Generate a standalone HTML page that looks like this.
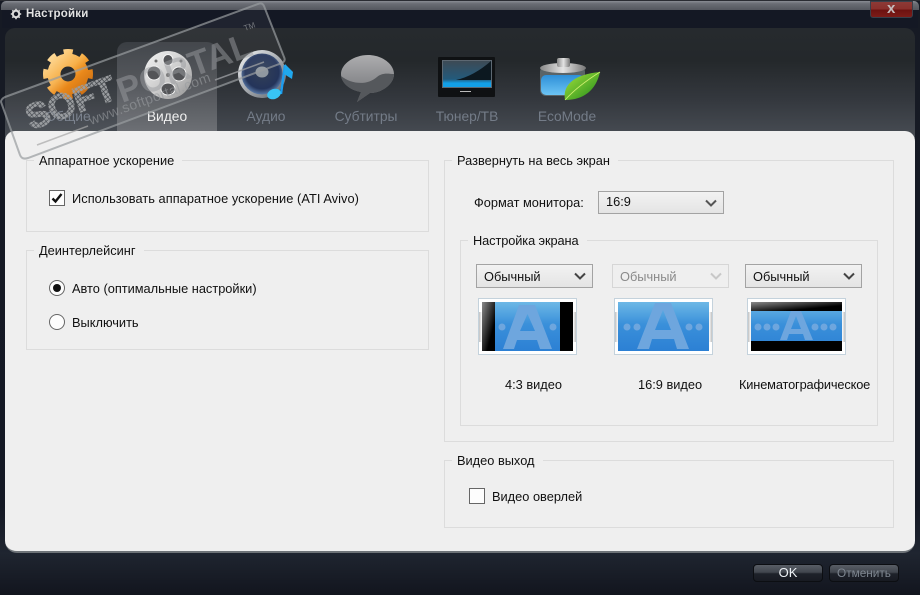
<!DOCTYPE html>
<html><head><meta charset="utf-8">
<style>
html,body{margin:0;padding:0;background:#000}
#w{position:relative;width:920px;height:595px;overflow:hidden;background:linear-gradient(#161a24 0,#141824 85%,#1f2530 93%,#12151e 100%);font-family:"Liberation Sans",sans-serif;font-size:12.8px;color:#111}
.a{position:absolute}
.t{position:absolute;white-space:nowrap;line-height:16px}
.gb{position:absolute;border:1px solid #dcdcdc;box-sizing:border-box}
.lg{position:absolute;background:#efefef;padding:0 8px 0 5px;white-space:nowrap;line-height:16px;height:16px}
.sel{position:absolute;box-sizing:border-box;border:1px solid #a3a3a3;background:linear-gradient(#f2f2f2,#e4e4e4);line-height:23px;padding-left:7px;height:24px}
.sel svg{position:absolute;right:5px;top:7px}
.sel.d{border-color:#d6d6d6;background:#efefef;color:#8a8a8a}
.tab{position:absolute;top:109px;line-height:16px;color:#747c88;text-align:center;width:100px;font-size:13.8px}
.thumb{position:absolute;top:298px;width:99px;height:57px;box-sizing:border-box;border:1px solid #c4d2dc;background:linear-gradient(90deg,#c0c0c0,#fff) no-repeat left center/3px 30px,linear-gradient(270deg,#c0c0c0,#fff) no-repeat right center/3px 30px,#fff}
.btn{position:absolute;top:564px;width:70px;height:18px;box-sizing:border-box;border:1px solid #0c0e12;border-radius:4px;background:linear-gradient(#585d65 0,#42474f 45%,#1e222a 55%,#181b22 100%);text-align:center;line-height:16px}
</style></head>
<body><div id="w">
<!-- title bar -->
<div class="a" style="left:1px;top:1px;width:918px;height:9px;border-radius:5px 5px 0 0;background:linear-gradient(#8a8d94 0,#6a6d74 30%,#54575e 100%)"></div>
<div class="a" style="left:0;top:0;width:920px;height:1px;background:#2a2c32"></div>
<div class="a" style="left:2px;top:10px;width:916px;height:18px;background:#141824"></div>
<div class="t" style="left:26px;top:6px;color:#e2e2e2;font-weight:bold;font-size:11.5px;letter-spacing:.2px">Настройки</div>
<svg class="a" style="left:10px;top:8px" width="12" height="12" viewBox="0 0 12 12"><circle cx="6" cy="6" r="3.2" fill="none" stroke="#dcdcdc" stroke-width="2"/><path d="M6 .8V3M6 9v2.2M.8 6H3M9 6h2.2M2.3 2.3l1.6 1.6M8.100 8.100l1.600 1.600M9.700 2.300L8.100 3.900M3.900 8.100L2.300 9.700" stroke="#dcdcdc" stroke-width="1.6"/></svg>
<!-- close -->
<div class="a" style="left:870px;top:1px;width:43px;height:17px;box-sizing:border-box;border:1px solid #3a3f4a;border-radius:0 0 3px 3px;background:linear-gradient(#8c3a36 0,#8a302c 45%,#6e1210 55%,#7c1c18 100%)"></div>
<div class="t" style="left:887px;top:1px;color:#c4bcbc;font-weight:bold;font-size:15px">x</div>
<!-- header panel -->
<div class="a" style="left:5px;top:28px;width:910px;height:110px;border-radius:10px 10px 0 0;background:linear-gradient(#262a2e 0,#24282b 30%,#34383e 65%,#484d54 100%)"></div>
<div class="a" style="left:117px;top:42px;width:100px;height:90px;border-radius:10px 10px 0 0;background:linear-gradient(#3a3e43 0,#4a4d52 40%,#6d7075 100%)"></div>
<!-- gear -->
<svg class="a" style="left:43px;top:49px" width="50" height="50" viewBox="0 0 50 50">
<defs><linearGradient id="g1" gradientUnits="userSpaceOnUse" x1="6" y1="4" x2="44" y2="46"><stop offset="0" stop-color="#ffe0a4"/><stop offset=".45" stop-color="#f7b04a"/><stop offset=".65" stop-color="#e8820e"/><stop offset="1" stop-color="#c46408"/></linearGradient></defs>
<circle cx="25" cy="25" r="14" fill="none" stroke="url(#g1)" stroke-width="13"/>
<circle cx="25" cy="25" r="22" fill="none" stroke="url(#g1)" stroke-width="6" stroke-dasharray="9 8.280" stroke-dashoffset="4.500"/>
</svg>
<!-- reel -->
<svg class="a" style="left:141px;top:50px" width="54" height="52" viewBox="0 0 54 52">
<defs><linearGradient id="g2" x1="0" y1="0" x2="1" y2="1"><stop offset="0" stop-color="#f4f4f4"/><stop offset=".55" stop-color="#c8c8c8"/><stop offset="1" stop-color="#8c8c8c"/></linearGradient></defs>
<circle cx="27" cy="25" r="24" fill="url(#g2)"/>
<g fill="#4a4b4e" stroke="#f4f4f4" stroke-width="1"><ellipse cx="27" cy="10" rx="5" ry="5.500"/><ellipse cx="13" cy="23" rx="7" ry="7"/><ellipse cx="38" cy="24" rx="7" ry="7"/><ellipse cx="27" cy="39" rx="7" ry="6"/></g>
<circle cx="27" cy="25" r="2" fill="#777"/><circle cx="15" cy="11" r="1.500" fill="#666"/><circle cx="40" cy="11" r="1.500" fill="#666"/>
</svg>
<!-- speaker -->
<svg class="a" style="left:237px;top:48px" width="62" height="56" viewBox="0 0 62 56">
<defs><radialGradient id="g3" cx=".5" cy=".45" r=".55"><stop offset="0" stop-color="#8fa0b0"/><stop offset=".25" stop-color="#2e3c58"/><stop offset=".75" stop-color="#24345a"/><stop offset="1" stop-color="#5a7aa8"/></radialGradient><linearGradient id="g4" x1="0" y1="0" x2="1" y2="1"><stop offset="0" stop-color="#f2f4f6"/><stop offset="1" stop-color="#5a6068"/></linearGradient></defs>
<circle cx="25" cy="26" r="24" fill="url(#g4)"/><circle cx="25" cy="26" r="20.500" fill="url(#g3)"/><ellipse cx="25" cy="24" rx="6.500" ry="5.500" fill="#9098a0"/>
<path d="M48 17L44 46" stroke="#1b9cf0" stroke-width="2.400" fill="none"/><path d="M48 16L56 24 55 31 47 26z" fill="#20a8ee"/><ellipse cx="37" cy="46" rx="7" ry="5" fill="#38c4f4" transform="rotate(-20 37 46)"/>
</svg>
<!-- bubble -->
<svg class="a" style="left:339px;top:52px" width="58" height="52" viewBox="0 0 58 52">
<defs><linearGradient id="g5" x1="0" y1="0" x2="0" y2="1"><stop offset="0" stop-color="#adadaf"/><stop offset=".55" stop-color="#8a8b8e"/><stop offset="1" stop-color="#75777a"/></linearGradient></defs>
<path d="M29 3C43 3 55 12 55 22 55 32 43 41 31 41L18 50 22 40C10 38 2 30 2 22 2 12 15 3 29 3z" fill="url(#g5)"/>
<path d="M2 24C12 32 28 34 38 25 44 20 50 22 55 22 55 32 43 41 31 41L18 50 22 40C10 38 3 31 2 24z" fill="#55585c"/>
</svg>
<!-- tv -->
<svg class="a" style="left:436px;top:56px" width="62" height="44" viewBox="0 0 62 44">
<defs><linearGradient id="g6" x1="0" y1="0" x2="0" y2="1"><stop offset="0" stop-color="#3d4a55"/><stop offset=".7" stop-color="#235a7c"/><stop offset=".85" stop-color="#12a0e8"/><stop offset="1" stop-color="#12a0e8"/></linearGradient></defs>
<rect x="2" y="1" width="57" height="40" rx="1" fill="#0f1113"/><rect x="6" y="4" width="50" height="28" fill="#5d6872"/><rect x="7" y="5" width="48" height="26" fill="url(#g6)"/><path d="M20 24Q38 20 55 5V24z" fill="#0c1820"/><rect x="24" y="35" width="11" height="1" fill="#bbb"/>
</svg>
<!-- battery -->
<svg class="a" style="left:538px;top:56px" width="66" height="48" viewBox="0 0 66 48">
<defs><linearGradient id="g7" x1="0" y1="0" x2="0" y2="1"><stop offset="0" stop-color="#2e8fd8"/><stop offset="1" stop-color="#6cc4f4"/></linearGradient><linearGradient id="g8" x1="0" y1="0" x2="1" y2="1"><stop offset="0" stop-color="#a6e23c"/><stop offset="1" stop-color="#1e8a1a"/></linearGradient><linearGradient id="g9" x1="0" y1="0" x2="1" y2="0"><stop offset="0" stop-color="#888"/><stop offset=".5" stop-color="#e4e4e4"/><stop offset="1" stop-color="#777"/></linearGradient></defs>
<rect x="2" y="10" width="45" height="30" rx="6" fill="#5a6468"/>
<ellipse cx="25" cy="12" rx="23" ry="5" fill="url(#g9)"/><rect x="19" y="2" width="13" height="9" rx="2" fill="url(#g9)"/>
<rect x="3" y="19" width="43" height="20" rx="5" fill="url(#g7)"/>
<path d="M27 44C24 28 38 18 62 16 58 34 46 44 27 44z" fill="url(#g8)"/><path d="M27 44C36 34 46 26 62 16" stroke="#d0f070" stroke-width=".8" fill="none"/>
</svg>
<!-- tab labels -->
<div class="tab" style="left:18px">Общие</div>
<div class="tab" style="left:117px;color:#f0f0f0">Видео</div>
<div class="tab" style="left:216px">Аудио</div>
<div class="tab" style="left:316px">Субтитры</div>
<div class="tab" style="left:417px">Тюнер/ТВ</div>
<div class="tab" style="left:517px">EcoMode</div>
<!-- main panel -->
<div class="a" style="left:5px;top:131px;width:910px;height:422px;box-sizing:border-box;border-radius:10px 10px 12px 12px;background:#efefef;border-bottom:2px solid #6e7378"></div>
<!-- left -->
<div class="gb" style="left:26px;top:160px;width:403px;height:72px"></div>
<div class="lg" style="left:34px;top:153px">Аппаратное ускорение</div>
<div class="a" style="left:49px;top:190px;width:16px;height:16px;box-sizing:border-box;border:1px solid #666;background:#fdfdfd"></div>
<svg class="a" style="left:49px;top:190px" width="16" height="16" viewBox="0 0 16 16"><path d="M3.500 8.500L6.500 11.500 12.500 4" fill="none" stroke="#111" stroke-width="2.400"/></svg>
<div class="t" style="left:72px;top:191px;letter-spacing:.05px">Использовать аппаратное ускорение (ATI Avivo)</div>
<div class="gb" style="left:26px;top:250px;width:403px;height:100px"></div>
<div class="lg" style="left:34px;top:243px">Деинтерлейсинг</div>
<div class="a" style="left:49px;top:280px;width:16px;height:16px;box-sizing:border-box;border:1px solid #666;border-radius:50%;background:#fdfdfd"></div>
<div class="a" style="left:53px;top:284px;width:8px;height:8px;border-radius:50%;background:#111"></div>
<div class="t" style="left:72px;top:281px">Авто (оптимальные настройки)</div>
<div class="a" style="left:49px;top:314px;width:16px;height:16px;box-sizing:border-box;border:1px solid #666;border-radius:50%;background:#fdfdfd"></div>
<div class="t" style="left:72px;top:315px">Выключить</div>
<!-- right -->
<div class="gb" style="left:444px;top:160px;width:450px;height:282px"></div>
<div class="lg" style="left:452px;top:153px">Развернуть на весь экран</div>
<div class="t" style="left:474px;top:195px">Формат монитора:</div>
<div class="sel" style="left:598px;top:191px;width:126px;height:23px;line-height:20px">16:9<svg width="14" height="9" viewBox="0 0 14 9"><path d="M2 1.500L7 6.500 12 1.500" fill="none" stroke="#555" stroke-width="2"/></svg></div>
<div class="gb" style="left:460px;top:240px;width:418px;height:186px"></div>
<div class="lg" style="left:468px;top:233px;letter-spacing:-.1px">Настройка экрана</div>
<div class="sel" style="left:476px;top:264px;width:117px">Обычный<svg width="14" height="9" viewBox="0 0 14 9"><path d="M2 1.500L7 6.500 12 1.500" fill="none" stroke="#444" stroke-width="2"/></svg></div>
<div class="sel d" style="left:612px;top:264px;width:117px">Обычный<svg width="14" height="9" viewBox="0 0 14 9"><path d="M2 1.500L7 6.500 12 1.500" fill="none" stroke="#c8c8c8" stroke-width="2"/></svg></div>
<div class="sel" style="left:745px;top:264px;width:117px">Обычный<svg width="14" height="9" viewBox="0 0 14 9"><path d="M2 1.500L7 6.500 12 1.500" fill="none" stroke="#444" stroke-width="2"/></svg></div>
<!-- thumbs -->
<svg width="0" height="0" style="position:absolute"><defs><linearGradient id="b" x1="0" y1="0" x2="0" y2="1"><stop offset="0" stop-color="#6db8e6"/><stop offset=".45" stop-color="#3a90da"/><stop offset="1" stop-color="#2c80d4"/></linearGradient><linearGradient id="bk" x1="0" y1="0" x2="1" y2="1"><stop offset="0" stop-color="#8a8a8a"/><stop offset=".7" stop-color="#000"/></linearGradient></defs></svg>
<div class="thumb" style="left:478px"></div>
<svg class="a" style="left:482px;top:302px" width="91" height="49" viewBox="0 0 91 49"><rect width="91" height="49" fill="url(#b)"/><g fill="#6ea6de"><circle cx="20" cy="25" r="3.500"/><circle cx="71" cy="25" r="3.500"/><path d="M21 47L37 3h16l17 44H58l-3-9H35l-3 9zM38 29h15l-7.500-17z" fill-rule="evenodd"/></g><rect width="13" height="49" fill="url(#bk)"/><rect x="78" width="13" height="49" fill="#000"/></svg>
<div class="thumb" style="left:614px"></div>
<svg class="a" style="left:618px;top:302px" width="91" height="49" viewBox="0 0 91 49"><rect width="91" height="49" fill="url(#b)"/><g fill="#6ea6de"><circle cx="9" cy="25" r="3.500"/><circle cx="19" cy="25" r="3.500"/><circle cx="71" cy="25" r="3.500"/><circle cx="81" cy="25" r="3.500"/><path d="M19 47L37 1h16l18 46H59l-3-10H34l-3 10zM37 28h16l-8-20z" fill-rule="evenodd"/></g></svg>
<div class="thumb" style="left:747px"></div>
<svg class="a" style="left:751px;top:302px" width="91" height="49" viewBox="0 0 91 49"><rect width="91" height="49" fill="url(#b)"/><g fill="#6ea6de"><circle cx="7" cy="25" r="3.500"/><circle cx="16" cy="25" r="3.500"/><circle cx="25" cy="25" r="3.500"/><circle cx="64" cy="25" r="3.500"/><circle cx="73" cy="25" r="3.500"/><circle cx="82" cy="25" r="3.500"/><path d="M29 38L40 9h10l12 29h-8l-2-6H38l-2 6zM40 27h10l-5-13z" fill-rule="evenodd"/></g><rect width="91" height="9" fill="url(#bk)"/><rect y="39" width="91" height="10" fill="#000"/></svg>
<div class="t" style="left:505px;top:377px">4:3 видео</div>
<div class="t" style="left:638px;top:377px">16:9 видео</div>
<div class="t" style="left:739px;top:377px;letter-spacing:-.15px">Кинематографическое</div>
<div class="gb" style="left:444px;top:460px;width:450px;height:68px"></div>
<div class="lg" style="left:452px;top:453px">Видео выход</div>
<div class="a" style="left:469px;top:488px;width:16px;height:16px;box-sizing:border-box;border:1px solid #666;background:#fdfdfd"></div>
<div class="t" style="left:492px;top:489px">Видео оверлей</div>
<!-- buttons -->
<div class="btn" style="left:753px;color:#eef2f6;font-size:13px">OK</div>
<div class="btn" style="left:829px;color:#7e8690;font-size:11.800px">Отменить</div>
<!-- watermark -->
<svg class="a" style="left:0;top:0" width="320" height="180" viewBox="0 0 320 180">
<defs><pattern id="dots" width="3.500" height="3.500" patternUnits="userSpaceOnUse" patternTransform="rotate(-20)"><rect width="2.800" height="2.800" fill="#9a9da0"/></pattern></defs>
<path d="M5 97L258 4Q262 2 264 6L284 57Q286 61 282 63L28 158Q22 160 20 155L1 102Q1 99 5 97z" fill="#fff" fill-opacity=".05" stroke="#999ca0" stroke-opacity=".7" stroke-width="2"/>
<text transform="translate(31,130) rotate(-20)" font-family="Liberation Sans" font-weight="bold" font-size="35" fill="url(#dots)" stroke="url(#dots)" stroke-width="1.500">SOFT</text>
<text transform="translate(122,103) rotate(-20)" font-family="Liberation Sans" font-weight="bold" font-size="35" fill="#9a9ca0" fill-opacity=".5">PORTAL</text>
<text transform="translate(245,31) rotate(-20)" font-family="Liberation Sans" font-size="8" fill="#9a9ca0" fill-opacity=".7">TM</text>
<text transform="translate(91,125) rotate(-20)" font-family="Liberation Sans" font-size="14" letter-spacing=".4" fill="#9a9ca0" fill-opacity=".6">www.softportal.com</text>
<path d="M215 80L264 62" stroke="#9a9ca0" stroke-opacity=".8" stroke-width="1.500"/>
<path d="M37 145L88 126" stroke="#a8a8a8" stroke-opacity=".7" stroke-width="1.500"/>
</svg>
</div></body></html>
